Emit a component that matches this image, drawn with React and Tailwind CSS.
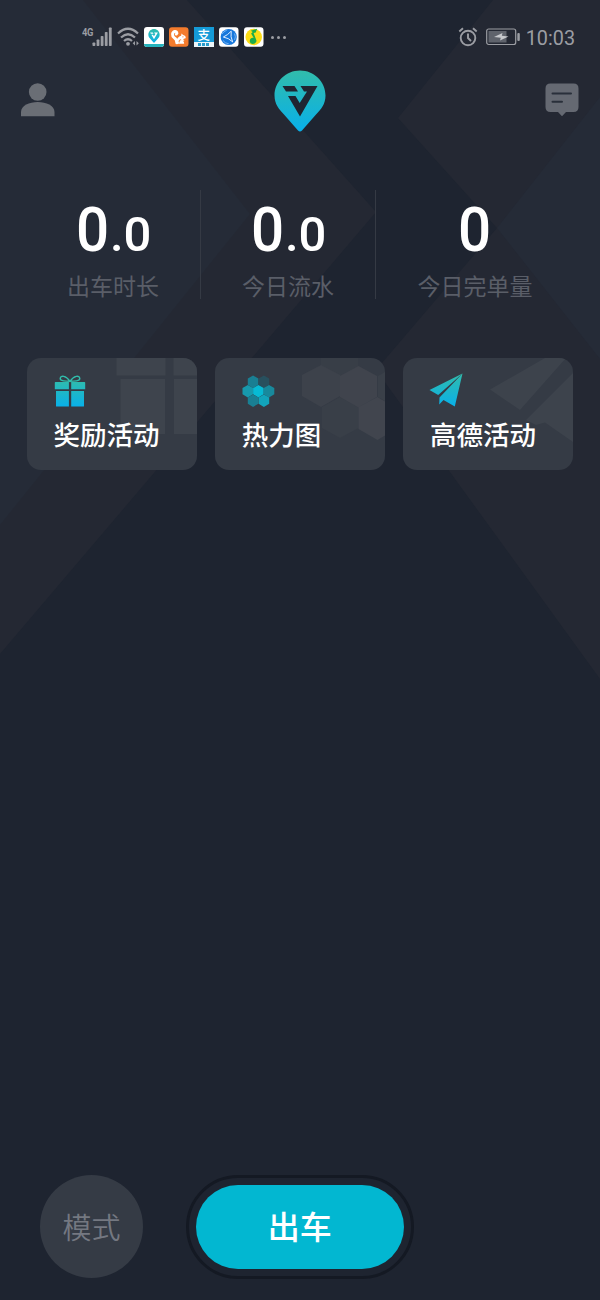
import { useId } from "react";

const stats = [
  { label: "出车时长", whole: "0", fraction: ".0", width: "w-[175px]" },
  { label: "今日流水", whole: "0", fraction: ".0", width: "w-[175px]" },
  { label: "今日完单量", whole: "0", fraction: "", width: "w-[198px]" },
];

const HEX = "0,-6.2 5.3,-3.1 5.3,3.1 0,6.2 -5.3,3.1 -5.3,-3.1";

// Large folded-paper shapes behind the dashboard
function Backdrop() {
  return (
    <svg className="absolute inset-0" width="600" height="1300" viewBox="0 0 600 1300">
      <path d="M0 0H187L376 212L0 654Z" fill="#242833" />
      <path d="M0 0H83L250 214L0 525Z" fill="#252b37" />
      <path d="M493 0H600V679L376 370L497 228L398 118Z" fill="#242833" />
      <path d="M600 97L497 228L600 359Z" fill="#252b37" />
    </svg>
  );
}

function BrandPin({ className, dark = "#1f2531" }) {
  const id = useId();
  return (
    <svg className={className} viewBox="0 0 52 63">
      <defs>
        <linearGradient id={id} x1="0" y1="0" x2="0" y2="1">
          <stop offset="0" stopColor="#31bcab" />
          <stop offset="1" stopColor="#08b0ea" />
        </linearGradient>
      </defs>
      <path
        d="M26 0.5C40 0.5 51.5 11.5 51.5 25.5C51.5 34 47 39.5 42 44.5L28 60.5Q26 62.5 24 60.5L10 44.5C5 39.5 0.5 34 0.5 25.5C0.5 11.5 12 0.5 26 0.5Z"
        fill={`url(#${id})`}
      />
      <path
        d="M8.5 16H20.5L24 21.500H12ZM26.500 16H43.500L26 46.500L14 26H21.500L25.700 33L33 21.500H30Z"
        fill={dark}
      />
    </svg>
  );
}

function Signal() {
  return (
    <svg width="20" height="20" viewBox="0 0 20 20" fill="#9b9da3">
      <rect x="0.5" y="15.500" width="2.800" height="3.500" rx="0.7" />
      <rect x="4.600" y="12.500" width="2.800" height="6.500" rx="0.7" />
      <rect x="8.700" y="9" width="2.800" height="10" rx="0.7" />
      <rect x="12.800" y="5" width="2.800" height="14" rx="0.7" />
      <rect x="16.900" y="0.500" width="2.800" height="18.500" rx="0.7" />
    </svg>
  );
}

function Wifi() {
  return (
    <svg width="23" height="20" viewBox="0 0 23 20" fill="none" stroke="#9b9da3" strokeWidth="2.200">
      <path d="M1 6.500Q11 -3 21 6.500" />
      <path d="M4 10.500Q11 4 18 10.500" />
      <path d="M7 14Q11 10.500 15 14" />
      <circle cx="11" cy="16.800" r="1.900" fill="#9b9da3" stroke="none" />
      <path d="M18 14V18.500L15.700 16.200ZM19.500 14V18.500L21.800 16.200Z" fill="#9b9da3" stroke="none" />
    </svg>
  );
}

function StatusApps() {
  return (
    <div className="flex gap-[5.500px]">
      <div className="flex h-[20px] w-[19.500px] flex-col items-center overflow-hidden rounded-[3px] bg-white">
        <BrandPin className="mt-[2px] h-[14px] w-[12px] shrink-0" dark="#ffffff" />
        <div className="mt-[1px] h-[3px] w-full bg-[#25b3bd]" />
      </div>
      <svg width="19.500" height="20" viewBox="0 0 20 20" fill="none">
        <rect width="20" height="20" rx="3" fill="#f37b2d" />
        <path d="M8 16C8.200 13 7 12 5.200 10.700C3 9 3 5 6 4.300C8 4 8.800 6 7.500 7" stroke="#fff" strokeWidth="3" strokeLinecap="round" />
        <path d="M7 17C7.500 11.500 10 9.500 12.500 8.800L12.800 6.300L14.500 8C16.500 8.300 17.700 10 17 11.200L14.500 12L15.800 14L13.800 13.500C15.300 14.500 15.500 15.500 15.500 17Z" fill="#fff" />
        <path d="M10.500 15.500C10 13.500 11 12.500 12.500 13" stroke="#f37b2d" strokeWidth="1" />
        <circle cx="14.300" cy="9.800" r="0.600" fill="#f37b2d" />
      </svg>
      <div className="h-[20px] w-[19.500px] bg-[#159bd8]">
        <div className="h-[15px] text-center text-[12.500px] font-medium leading-[15px] text-white font-['Noto_Sans_CJK_SC',sans-serif]">
          支
        </div>
        <div className="flex h-[5px] items-center justify-center gap-[1px] bg-[#eef7fb]">
          <span className="h-[3px] w-[3px] bg-[#2a9dcc]" />
          <span className="h-[3px] w-[3px] bg-[#2a9dcc]" />
          <span className="h-[3px] w-[3px] bg-[#2a9dcc]" />
        </div>
      </div>
      <svg width="19.500" height="20" viewBox="0 0 20 20" fill="none">
        <rect width="20" height="20" rx="3" fill="#fff" />
        <circle cx="10" cy="10" r="8.300" fill="#1778dc" />
        <path d="M4.500 10Q9 8 12.500 4Q11.500 10 14 15Q10 11 4.500 10" stroke="#e6f2ff" strokeWidth="1" />
        <path d="M3 7Q5 4 8 3M16 6.500Q17.500 10 16 13M4 13.500Q6 16.500 10 17" stroke="#8fc4fa" strokeWidth="0.800" />
      </svg>
      <svg width="19.500" height="20" viewBox="0 0 20 20">
        <rect width="20" height="20" rx="3" fill="#fff" />
        <circle cx="10" cy="10" r="8.500" fill="#fbdc15" />
        <path d="M7 3.500L13.500 1.500L12 5.500L9.800 6L12.800 13.500C13 17.500 7 18.500 6 14.800C5.500 11.800 8 10.500 10 11L7.300 6.500L9 4.800Z" fill="#1aad4b" />
      </svg>
    </div>
  );
}

function StatusBar() {
  return (
    <div className="flex h-[74px] items-center pl-[82px] pr-[25px] font-[Roboto,sans-serif] text-[#9b9da3]">
      <span className="mb-[10px] w-[10px] origin-left scale-x-[0.85] text-[11px] font-bold leading-none tracking-[-0.500px]">
        4G
      </span>
      <Signal />
      <div className="ml-[4.500px] mr-[4.500px]">
        <Wifi />
      </div>
      <StatusApps />
      <div className="ml-[7.500px] flex gap-[3px]">
        <span className="size-[3px] rounded-full bg-[#9b9da3]" />
        <span className="size-[3px] rounded-full bg-[#9b9da3]" />
        <span className="size-[3px] rounded-full bg-[#9b9da3]" />
      </div>
      <div className="ml-auto flex items-center">
        <svg width="20" height="20" viewBox="0 0 20 20" fill="none" stroke="#9b9da3" strokeWidth="1.900">
          <circle cx="10" cy="11" r="7.300" />
          <path d="M10 6.500V11L13 14M1.300 4.500L5 1.300M18.700 4.500L15 1.300" />
        </svg>
        <svg className="ml-[8px]" width="35" height="18" viewBox="0 0 35 18">
          <rect x="0.700" y="1" width="29" height="15.500" rx="2" fill="none" stroke="#9b9da3" strokeWidth="1.200" />
          <rect x="2.500" y="3" width="18" height="11.500" fill="#5f636c" />
          <rect x="31.300" y="5" width="2.500" height="8" rx="1" fill="#9b9da3" />
          <path d="M8 9L16.500 5L15.800 7.800L22.500 8.500L14 12.500L14.800 9.700Z" fill="#c6c8cc" />
        </svg>
        <span className="ml-[4.500px] mt-[3px] text-[19.800px] leading-none">10:03</span>
      </div>
    </div>
  );
}

function Header() {
  return (
    <div className="-mt-[3.500px] flex h-[58px] items-center justify-between px-[21px]">
      <svg width="34" height="34" viewBox="0 0 34 34" fill="#6a6e75">
        <circle cx="16.700" cy="9" r="8.800" />
        <path d="M0 33.300V29C0 15.500 33.500 15.500 33.500 29V33.300Z" />
      </svg>
      <BrandPin className="mt-[4px] h-[63px] w-[52px]" />
      <svg width="34" height="34" viewBox="0 0 34 34">
        <path d="M5.500 0.500H28.500Q33.500 0.500 33.500 5.500V24Q33.500 29 28.500 29H21L17 33.300L13 29H5.500Q0.500 29 0.500 24V5.500Q0.500 0.500 5.500 0.500Z" fill="#656972" />
        <path d="M7.500 10.500H26M7.500 18.800H17" stroke="#292f3a" strokeWidth="2" strokeLinecap="round" />
      </svg>
    </div>
  );
}

function GiftIcon() {
  const id = useId();
  return (
    <svg width="32" height="32" viewBox="0 0 32 32">
      <defs>
        <linearGradient id={id} x1="0" y1="0" x2="0" y2="32" gradientUnits="userSpaceOnUse">
          <stop offset="0.150" stopColor="#31bcab" />
          <stop offset="1" stopColor="#08b0ea" />
        </linearGradient>
      </defs>
      <path
        d="M1.500 7H14.900V14.300H1Q0.800 14.300 0.800 14V7.800Q0.800 7 1.500 7ZM17.200 7H30.500Q31.200 7 31.200 7.700V14.300H17.200ZM2 16H14.900V31.500H2.500Q2 31.500 2 31ZM17.200 16H30V31Q30 31.500 29.500 31.500H17.200Z"
        fill={`url(#${id})`}
      />
      <path d="M16 6.300C12 0.500 6.500 0 6.200 3.500C6 6 12 6.300 16 6.300C20 6.300 26 6 25.800 3.500C25.500 0 20 0.500 16 6.300Z" fill="none" stroke="#31bcab" strokeWidth="1.400" />
    </svg>
  );
}

function HeatIcon() {
  const cells = [
    [11.1, 6.7, "#197f93"],
    [21.9, 6.7, "#28505e"],
    [5.8, 16.2, "#1799ac"],
    [16.4, 16.2, "#07bad4"],
    [27, 16.2, "#18899c"],
    [11.1, 25.7, "#197f93"],
    [21.9, 25.7, "#12a4bb"],
  ];
  return (
    <svg width="33" height="32" viewBox="0 0 33 32">
      {cells.map(([x, y, fill], i) => (
        <polygon key={i} points={HEX} fill={fill} transform={`translate(${x} ${y})`} />
      ))}
    </svg>
  );
}

function PlaneIcon() {
  const id = useId();
  return (
    <svg className="-mt-[1.500px] -ml-px" width="34" height="34" viewBox="0 0 34 34">
      <defs>
        <linearGradient id={id} x1="0" y1="0" x2="0" y2="34" gradientUnits="userSpaceOnUse">
          <stop offset="0" stopColor="#31bcab" />
          <stop offset="1" stopColor="#08b0ea" />
        </linearGradient>
      </defs>
      <path d="M33.500 0.500L0.500 17L9.200 22ZM33.500 0.500L10.500 24.500L10.200 31.500L14.500 27L25.800 33.500Z" fill={`url(#${id})`} />
    </svg>
  );
}

// Oversized, faded icons that run off the right edge of each card
function GiftMark() {
  return (
    <path d="M89.500 0H138.500V17.500H89.500ZM146.500 0H170V17.500H146.500ZM93.500 21H138V76H93.500ZM147 21H170V76H147Z" fill="#3e444d" />
  );
}

function HeatMark() {
  return (
    <>
      <path d="M106 0H143V9L125 19.500L106 9Z" fill="#383e47" />
      <path d="M106 7L125 17V38L106 49L87 38V17Z" fill="#3d424b" />
      <path d="M125 39L143.500 49V70L125 80L107 70V49Z" fill="#393f48" />
      <path d="M143.500 8L162 18V39L143.500 49.500L125 39V18Z" fill="#40444d" />
      <path d="M162.500 39L181 50V71L162.500 82L143.500 71V49Z" fill="#41454e" />
      <path d="M163 18L170 14V43L163 39Z" fill="#3a4049" />
    </>
  );
}

function PlaneMark() {
  return <path d="M87 31.500L142 0H163L117 52ZM170 15L123 62L133 67L142 64.500L170 84Z" fill="#3d434c" />;
}

function ActionCard({ icon, mark, title }) {
  return (
    <button className="relative h-[112.500px] w-[170px] overflow-hidden rounded-[14px] bg-[#353b45] text-left">
      <svg className="absolute inset-0" width="170" height="113" viewBox="0 0 170 113">
        {mark}
      </svg>
      <div className="relative flex h-full flex-col pl-[27px] pt-[17px]">
        <div className="h-[41px]">{icon}</div>
        <span className="text-[26.500px] font-medium leading-[36px] text-white">{title}</span>
      </div>
    </button>
  );
}

export default function App() {
  return (
    <div className="relative h-[1300px] w-[600px] overflow-hidden bg-[#1e2430] font-['Noto_Sans_CJK_SC',sans-serif]">
      <Backdrop />
      <div className="relative flex h-full flex-col">
        <StatusBar />
        <Header />

        {/* Today's numbers */}
        <div className="mt-[61.500px] flex h-[109px] px-[26px]">
          {stats.map((stat) => (
            <div
              key={stat.label}
              className={`${stat.width} flex flex-col items-center border-r border-[#353a44] pt-[10px] last:border-r-0`}
            >
              <div className="font-[Roboto,sans-serif] text-[62px] font-medium leading-[60px] text-white">
                <span className="inline-block scale-x-[0.94]">{stat.whole}</span>
                <span className="text-[49px]">{stat.fraction}</span>
              </div>
              <span className="mt-[3px] text-[23px] font-normal leading-[34px] text-[#5a5e68]">{stat.label}</span>
            </div>
          ))}
        </div>

        {/* Shortcuts */}
        <div className="mt-[58.500px] flex justify-between pl-[26.500px] pr-[27px]">
          <ActionCard title="奖励活动" icon={<GiftIcon />} mark={<GiftMark />} />
          <ActionCard title="热力图" icon={<HeatIcon />} mark={<HeatMark />} />
          <ActionCard title="高德活动" icon={<PlaneIcon />} mark={<PlaneMark />} />
        </div>

        {/* Bottom controls */}
        <div className="mb-[21.500px] mt-auto flex items-center pl-[40px]">
          <button className="size-[103px] rounded-full bg-[#353b45] text-[29px] font-[350] text-[#747881]">模式</button>
          <div className="ml-[42.500px] rounded-full border-[3.500px] border-[#141923] p-[7px]">
            <button className="h-[83.500px] w-[208.500px] rounded-full bg-[#02b7d1] pb-[3px] text-[32px] font-medium text-white">
              出车
            </button>
          </div>
        </div>
      </div>
    </div>
  );
}
